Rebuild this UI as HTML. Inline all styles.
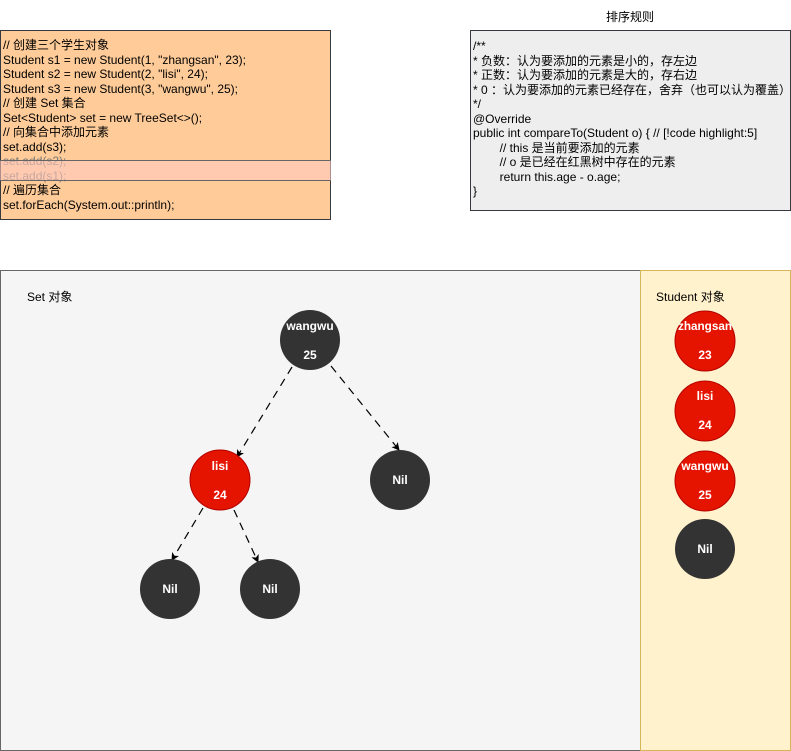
<!DOCTYPE html>
<html><head><meta charset="utf-8"><style>
body{margin:0;width:791px;height:751px;background:#fff;position:relative;overflow:hidden;font-family:"Liberation Sans","Noto Sans CJK SC",sans-serif;}
.box{position:absolute;box-sizing:border-box;font-size:12px;line-height:14.5px;color:#000;white-space:pre;}
</style></head><body>
<div class="box" style="left:0;top:30px;width:331px;height:190px;background:#ffcc99;border:1px solid #36393d;padding:7px 0 0 2px;">// 创建三个学生对象
Student s1 = new Student(1, "zhangsan", 23);
Student s2 = new Student(2, "lisi", 24);
Student s3 = new Student(3, "wangwu", 25);
// 创建 Set 集合
Set&lt;Student&gt; set = new TreeSet&lt;&gt;();
// 向集合中添加元素
set.add(s3);
<span style="color:#777">set.add(s2);
set.add(s1);</span>
// 遍历集合
set.forEach(System.out::println);</div>
<div style="position:absolute;left:0;top:160px;width:331px;height:21px;box-sizing:border-box;border-top:1px solid #666;border-bottom:1px solid #666;background:rgba(255,200,190,0.6)"></div>
<div style="position:absolute;left:606px;top:8px;font-size:12px;">排序规则</div>
<div class="box" style="left:470px;top:30px;width:321px;height:181px;background:#eeeeee;border:1px solid #36393d;padding:8px 0 0 2px;line-height:14.5px;">/**
* 负数：认为要添加的元素是小的，存左边
* 正数：认为要添加的元素是大的，存右边
* 0 ：认为要添加的元素已经存在，舍弃（也可以认为覆盖）
*/
@Override
public int compareTo(Student o) { // [!code highlight:5]
        // this 是当前要添加的元素
        // o 是已经在红黑树中存在的元素
        return this.age - o.age;
}</div>
<div style="position:absolute;left:0;top:270px;width:641px;height:481px;box-sizing:border-box;background:#f5f5f5;border:1px solid #666;"></div>
<div style="position:absolute;left:640px;top:270px;width:151px;height:481px;box-sizing:border-box;background:#fff2cc;border:1px solid #d6b656;"></div>
<div style="position:absolute;left:27px;top:288px;font-size:12px;">Set 对象</div>
<div style="position:absolute;left:656px;top:288px;font-size:12px;">Student 对象</div>
<svg style="position:absolute;left:0;top:0" width="791" height="751" font-family="Liberation Sans, sans-serif" font-weight="bold" font-size="12" fill="#fff" text-anchor="middle">
<defs><marker id="a" markerWidth="8" markerHeight="8" refX="7" refY="4" orient="auto" markerUnits="userSpaceOnUse"><path d="M0,0 L8,4 L0,8 L2,4 z" fill="#000"/></marker></defs>
<g stroke="#000" stroke-width="1.2" stroke-dasharray="8 6" fill="none" marker-end="url(#a)">
<line x1="292" y1="367" x2="237" y2="457"/>
<line x1="331" y1="366" x2="399" y2="450"/>
<line x1="203" y1="508" x2="172" y2="560"/>
<line x1="234" y1="510" x2="258" y2="562"/>
</g>
<circle cx="310" cy="340" r="30" fill="#333"/><text x="310" y="330">wangwu</text><text x="310" y="359">25</text>
<circle cx="220" cy="480" r="30" fill="#e51400" stroke="#b20000"/><text x="220" y="470">lisi</text><text x="220" y="499">24</text>
<circle cx="400" cy="480" r="30" fill="#333"/><text x="400" y="484">Nil</text>
<circle cx="170" cy="589" r="30" fill="#333"/><text x="170" y="593">Nil</text>
<circle cx="270" cy="589" r="30" fill="#333"/><text x="270" y="593">Nil</text>
<circle cx="705" cy="341" r="30" fill="#e51400" stroke="#b20000"/><text x="705" y="330" textLength="54" lengthAdjust="spacingAndGlyphs">zhangsan</text><text x="705" y="359">23</text>
<circle cx="705" cy="411" r="30" fill="#e51400" stroke="#b20000"/><text x="705" y="400">lisi</text><text x="705" y="429">24</text>
<circle cx="705" cy="481" r="30" fill="#e51400" stroke="#b20000"/><text x="705" y="470">wangwu</text><text x="705" y="499">25</text>
<circle cx="705" cy="549" r="30" fill="#333"/><text x="705" y="553">Nil</text>
</svg>
</body></html>
